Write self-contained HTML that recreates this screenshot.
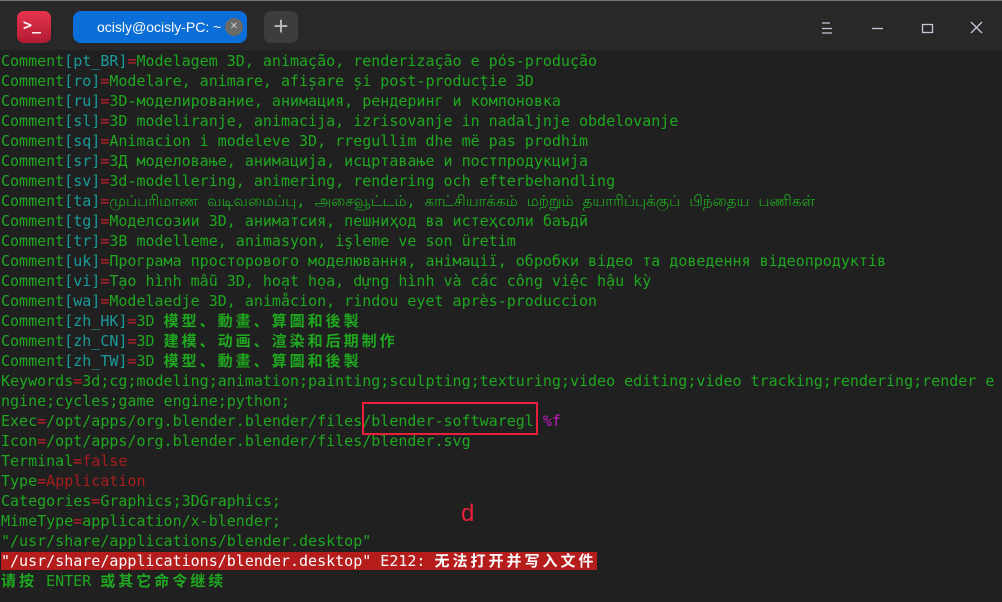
<!DOCTYPE html>
<html><head><meta charset="utf-8"><style>
body{margin:0;width:1002px;height:602px;background:#202020;overflow:hidden;position:relative;font-family:"Liberation Sans","Noto Sans CJK SC",sans-serif}
.tb{position:absolute;left:0;top:0;width:1002px;height:50px;background:#282828;border-top:1px solid #777;box-sizing:border-box}
.logo{position:absolute;left:17px;top:10px;width:34px;height:32px;border-radius:7px;background:linear-gradient(#e8344e,#b01c32);color:#fff;font:bold 15px "DejaVu Sans Mono",monospace;line-height:28px;padding-left:6px;box-sizing:border-box}
.tab{position:absolute;left:73px;top:10px;width:174px;height:32px;border-radius:8px;background:#0a6ed8;color:#fff;font-size:14px;line-height:32px;padding-left:24px;box-sizing:border-box;white-space:nowrap}
.tab .x{position:absolute;right:4px;top:7px;width:18px;height:18px;border-radius:9px;background:#6a6a6a;color:#ccc;font-size:10px;line-height:18px;text-align:center;padding:0}
.plus{position:absolute;left:264px;top:10px;width:34px;height:32px;border-radius:7px;background:#3d3d3d;color:#bbb;font-size:26px;line-height:30px;text-align:center}
.term{position:absolute;left:1px;top:51px;font:15px "DejaVu Sans Mono","Noto Sans CJK SC",monospace;line-height:20px;color:#1fa71f;white-space:pre}
.c{color:#1b9a9a}.r{color:#c81e28}.dr{color:#a51d1d}.m{color:#c21ec2}
.err{background:#b51c1c;color:#fff}
.k{letter-spacing:3px;font-weight:bold}
</style></head><body>
<div class="tb">
<div class="logo">&gt;_</div>
<div class="tab">ocisly@ocisly-PC: ~<span class="x">✕</span></div>
<div class="plus">+</div>
<svg style="position:absolute;left:780px;top:0" width="222" height="50" stroke="#c8c8d4" fill="none" stroke-width="1.3">
<path d="M42 22h8M42 27.5h10M42 32h10"/><path d="M92 27.5h11"/><rect x="142.5" y="23.5" width="10" height="8"/><path d="M191 21l11 11M202 21l-11 11"/>
</svg>
</div>
<div class="term">Comment<span class="c">[pt_BR]</span><span class="r">=</span>Modelagem 3D, animação, renderização e pós-produção
Comment<span class="c">[ro]</span><span class="r">=</span>Modelare, animare, afișare și post-producție 3D
Comment<span class="c">[ru]</span><span class="r">=</span>3D-моделирование, анимация, рендеринг и компоновка
Comment<span class="c">[sl]</span><span class="r">=</span>3D modeliranje, animacija, izrisovanje in nadaljnje obdelovanje
Comment<span class="c">[sq]</span><span class="r">=</span>Animacion i modeleve 3D, rregullim dhe më pas prodhim
Comment<span class="c">[sr]</span><span class="r">=</span>3Д моделовање, анимација, исцртавање и постпродукција
Comment<span class="c">[sv]</span><span class="r">=</span>3d-modellering, animering, rendering och efterbehandling
Comment<span class="c">[ta]</span><span class="r">=</span>முப்பரிமாண வடிவமைப்பு, அசைவூட்டம், காட்சியாக்கம் மற்றும் தயாரிப்புக்குப் பிந்தைய பணிகள்
Comment<span class="c">[tg]</span><span class="r">=</span>Моделсозии 3D, аниматсия, пешниҳод ва истеҳсоли баъдӣ
Comment<span class="c">[tr]</span><span class="r">=</span>3B modelleme, animasyon, işleme ve son üretim
Comment<span class="c">[uk]</span><span class="r">=</span>Програма просторового моделювання, анімації, обробки відео та доведення відеопродуктів
Comment<span class="c">[vi]</span><span class="r">=</span>Tạo hình mẫu 3D, hoạt họa, dựng hình và các công việc hậu kỳ
Comment<span class="c">[wa]</span><span class="r">=</span>Modelaedje 3D, animåcion, rindou eyet après-produccion
Comment<span class="c">[zh_HK]</span><span class="r">=</span>3D <span class="k">模型、動畫、算圖和後製</span>
Comment<span class="c">[zh_CN]</span><span class="r">=</span>3D <span class="k">建模、动画、渲染和后期制作</span>
Comment<span class="c">[zh_TW]</span><span class="r">=</span>3D <span class="k">模型、動畫、算圖和後製</span>
Keywords<span class="r">=</span>3d;cg;modeling;animation;painting;sculpting;texturing;video editing;video tracking;rendering;render e
ngine;cycles;game engine;python;
Exec<span class="r">=</span>/opt/apps/org.blender.blender/files/blender-softwaregl <span class="m">%f</span>
Icon<span class="r">=</span>/opt/apps/org.blender.blender/files/blender.svg
Terminal<span class="r">=</span><span class="dr">false</span>
Type<span class="r">=</span><span class="dr">Application</span>
Categories<span class="r">=</span>Graphics;3DGraphics;
MimeType<span class="r">=</span>application/x-blender;
"/usr/share/applications/blender.desktop"
<span class="err">"/usr/share/applications/blender.desktop" E212: <span class="k">无法打开并写入文件</span></span>
<span class="k">请按</span> ENTER <span class="k">或其它命令继续</span></div>
<div style="position:absolute;left:362px;top:402px;width:176px;height:33px;border:2px solid #e8203c;box-sizing:border-box"></div>
<div style="position:absolute;left:461px;top:500px;color:#e8203c;font-size:24px">d</div>
</body></html>
